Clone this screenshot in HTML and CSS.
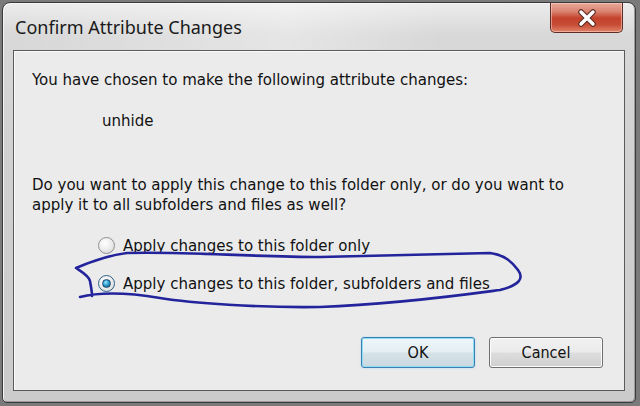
FILE: index.html
```html
<!DOCTYPE html>
<html>
<head>
<meta charset="utf-8">
<link rel="stylesheet" href="styles.css">
</head>
<body>
<div class="window">
  <div class="titlebar">
    <span class="title">Confirm Attribute Changes</span>
    <button class="close" aria-label="Close">
      <svg width="22" height="20" viewBox="0 0 22 20"><path d="M5 4 L17 16 M17 4 L5 16" stroke="#5a2a22" stroke-width="5.5" stroke-linecap="round"/><path d="M5 4 L17 16 M17 4 L5 16" stroke="#fff" stroke-width="3.4" stroke-linecap="round"/></svg>
    </button>
  </div>
  <div class="panel">
    <p class="line">You have chosen to make the following attribute changes:</p>
    <p class="line attr">unhide</p>
    <p class="line question">Do you want to apply this change to this folder only, or do you want to apply it to all subfolders and files as well?</p>
    <div class="options">
      <label class="option"><span class="radio"></span><span>Apply changes to this folder only</span></label>
      <label class="option"><span class="radio checked"></span><span>Apply changes to this folder, subfolders and files</span></label>
    </div>
    <div class="buttons">
      <button class="btn default">OK</button>
      <button class="btn">Cancel</button>
    </div>
  </div>
</div>
<svg class="scribble" width="640" height="406" viewBox="0 0 640 406">
  <path d="M80 297 C100 292,130 293,160 298 S260 308,320 307 C400 304,470 294,500 290 C520 285,524 278,518 270 C512 262,505 255,490 253 C440 254,380 256,320 257 C250 257,180 251,127 253 C110 255,95 260,76 268 C82 272,89 276,90 281 C91 287,92 291,92 296" fill="none" stroke="#23239b" stroke-width="2.6" stroke-linecap="round" stroke-linejoin="round"/>
</svg>
</body>
</html>
```

FILE: styles.css
```css
* { box-sizing: border-box; }
html, body { margin: 0; padding: 0; }
body {
  position: relative;
  width: 640px;
  height: 406px;
  background: #7a7a7a;
  overflow: hidden;
  font-family: "DejaVu Sans Condensed", "DejaVu Sans", sans-serif;
}
.window {
  margin: 2px 4px 3px 2px;
  height: 401px;
  border: 1px solid #3a3a3a;
  border-radius: 8px 8px 5px 5px;
  background: linear-gradient(180deg, #ececec 0%, #d8d8d8 8%, #d0d0d0 40%, #cbcbcb 100%);
  padding: 0 10px 11px 10px;
  display: flex;
  flex-direction: column;
  box-shadow: inset 1px 1px 0 #f4f4f4, inset -1px -1px 0 #9a9a9a;
}
.titlebar {
  height: 47px;
  display: flex;
  justify-content: space-between;
  align-items: flex-start;
  background: linear-gradient(90deg, rgba(255,255,255,0) 0%, rgba(255,255,255,0.35) 45%, rgba(255,255,255,0) 70%);
}
.title {
  font-family: "Noto Sans", "Open Sans", sans-serif;
  font-size: 18px;
  color: #1a1a1a;
  margin-top: 12px;
  margin-left: 2px;
}
.close {
  width: 73px;
  height: 30px;
  margin-right: 2px;
  border: 1px solid #5e2e26;
  border-top: none;
  border-radius: 0 0 5px 5px;
  background: linear-gradient(180deg, #e9a999 0%, #d9826f 30%, #c4422c 52%, #c84d36 75%, #e2826a 100%);
  box-shadow: inset 0 0 0 1px rgba(255,220,210,0.5);
  display: flex;
  align-items: center;
  justify-content: center;
  padding: 0;
}
.panel {
  flex: 1;
  border: 1px solid #5a5a5a;
  background: #ebebeb;
  box-shadow: inset 1px 1px 0 #fafafa;
  padding: 18px 21px 22px 18px;
  display: flex;
  flex-direction: column;
  color: #111;
  font-size: 16.7px;
}
.line {
  margin: 0;
  line-height: 20px;
}
.attr {
  margin-top: 21px;
  margin-left: 70px;
}
.question {
  margin-top: 44px;
  width: 556px;
}
.options {
  margin-top: 21px;
  margin-left: 66px;
  display: flex;
  flex-direction: column;
  gap: 18px;
}
.option {
  display: flex;
  align-items: center;
  gap: 8px;
  height: 20px;
}
.radio {
  width: 17px;
  height: 17px;
  border-radius: 50%;
  border: 1px solid #8e8f8f;
  background: radial-gradient(circle at 40% 35%, #ffffff 0%, #ececec 50%, #cfcfcf 100%);
  position: relative;
  flex: none;
}
.radio.checked {
  border-color: #2c628b;
}
.radio.checked::after {
  content: "";
  position: absolute;
  left: 3px;
  top: 3px;
  width: 9px;
  height: 9px;
  border-radius: 50%;
  border: 1px solid #1b4a6b;
  background: radial-gradient(circle at 40% 35%, #9fe6ff 0%, #2e9fd3 45%, #0f4d78 100%);
  box-sizing: border-box;
}
.buttons {
  margin-top: auto;
  display: flex;
  justify-content: flex-end;
  gap: 14px;
}
.btn {
  width: 114px;
  height: 31px;
  border: 1px solid #707070;
  border-radius: 3px;
  background: linear-gradient(180deg, #f2f2f2 0%, #ebebeb 48%, #dddddd 52%, #cfcfcf 100%);
  box-shadow: inset 0 0 0 1px #fcfcfc;
  font-family: "DejaVu Sans Condensed", "DejaVu Sans", sans-serif;
  font-size: 16px;
  color: #111;
  padding: 0;
}
.btn.default {
  border-color: #3c7fb1;
  box-shadow: inset 0 0 0 1px #8fdcf5, 0 0 2px #9bd8f0;
  background: linear-gradient(180deg, #eef6fa 0%, #e4eef3 48%, #d6e2e8 52%, #cad8df 100%);
}
.scribble {
  position: absolute;
  left: 0;
  top: 0;
  pointer-events: none;
}
```
